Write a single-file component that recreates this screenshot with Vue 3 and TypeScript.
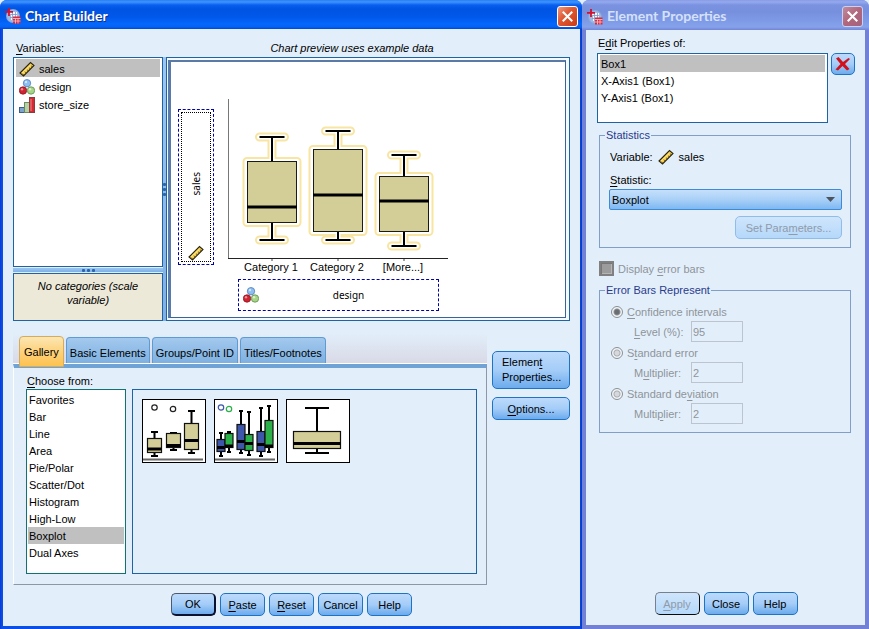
<script setup lang="ts">
import { ref } from 'vue'

type Measure = 'scale' | 'nominal' | 'ordinal'

interface Variable {
  name: string
  measure: Measure
}

interface Box {
  x: number
  width: number
  top: number
  bottom: number
  median: number
  high: number
  low: number
  cap: number
  fill: string
}

interface Outlier {
  x: number
  y: number
  color: string
}

interface Thumb {
  title: string
  axis: boolean
  boxes: Box[]
  outliers: Outlier[]
}

const TAN = '#d3ce98'
const BLUE = '#3e57ab'
const GREEN = '#2bb04a'

const variables: Variable[] = [
  { name: 'sales', measure: 'scale' },
  { name: 'design', measure: 'nominal' },
  { name: 'store_size', measure: 'ordinal' },
]
const activeVariable = ref('sales')

const tabs = ['Gallery', 'Basic Elements', 'Groups/Point ID', 'Titles/Footnotes']
const activeTab = ref('Gallery')

const chartTypes = [
  'Favorites', 'Bar', 'Line', 'Area', 'Pie/Polar', 'Scatter/Dot',
  'Histogram', 'High-Low', 'Boxplot', 'Dual Axes',
]
const chartType = ref('Boxplot')

const elements = ['Box1', 'X-Axis1 (Box1)', 'Y-Axis1 (Box1)']
const element = ref('Box1')
const statistic = ref('Boxplot')
const errorBars = ref(false)
const represent = ref('ci')
const level = ref('95')
const errorMultiplier = ref('2')
const deviationMultiplier = ref('2')

function box(
  x: number, width: number, top: number, bottom: number,
  median: number, high: number, low: number, cap: number, fill: string,
): Box {
  return { x, width, top, bottom, median, high, low, cap, fill }
}

const categories = [
  { label: 'Category 1', box: box(247, 50, 161.5, 222.5, 207, 137, 240, 25, TAN) },
  { label: 'Category 2', box: box(313, 50, 149.5, 231.5, 195, 131, 240, 25, TAN) },
  { label: '[More...]', box: box(379, 50, 176.5, 231.5, 201, 155, 246, 25, TAN) },
]

const thumbs: Thumb[] = [
  {
    title: 'Simple Boxplot',
    axis: true,
    boxes: [
      box(4.5, 14, 38.5, 52.5, 49, 32, 56, 7, TAN),
      box(23.5, 14, 33.5, 47.5, 45.5, 33, 50, 7, TAN),
      box(41.5, 14, 23.5, 49.5, 40.5, 11, 53, 7, TAN),
    ],
    outliers: [
      { x: 11.5, y: 7.5, color: '#222' },
      { x: 30, y: 9, color: '#222' },
    ],
  },
  {
    title: 'Clustered Boxplot',
    axis: true,
    boxes: [
      box(2, 8, 39.5, 51.5, 47.5, 33, 56, 4, BLUE),
      box(10, 8, 33.5, 47.5, 46, 32, 52, 4, GREEN),
      box(22, 8, 24.5, 49.5, 41.5, 11, 53, 4, BLUE),
      box(30, 8, 34.5, 50.5, 43.5, 12, 55, 4, GREEN),
      box(42, 8, 31.5, 51.5, 44.5, 8, 56, 4, BLUE),
      box(50, 8, 20.5, 47.5, 46, 6, 52, 4, GREEN),
    ],
    outliers: [
      { x: 6, y: 7.5, color: BLUE },
      { x: 14, y: 9, color: GREEN },
    ],
  },
  {
    title: '1-D Boxplot',
    axis: false,
    boxes: [box(6.5, 47, 31.5, 48.5, 43.5, 8, 53, 24, TAN)],
    outliers: [],
  },
]

function middle(b: Box): number {
  return b.x + b.width / 2
}

function whiskers(b: Box): string {
  const c = middle(b)
  const half = b.cap / 2
  return `M${c - half} ${b.high}H${c + half}M${c} ${b.high}V${b.top}` +
    `M${c} ${b.bottom}V${b.low}M${c - half} ${b.low}H${c + half}`
}

function outline(b: Box): string {
  return `${whiskers(b)}M${b.x} ${b.top}h${b.width}V${b.bottom}h${-b.width}Z`
}
</script>

<template>
  <svg class="symbols" width="0" height="0" aria-hidden="true">
    <symbol id="ic-scale" viewBox="0 0 16 16">
      <path d="M1 12 L11.5 1.5 L15 4.5 L4.5 15 Z" fill="#f6cf4c" stroke="#2b2410" stroke-width="1.1" />
      <path d="M3 12.3 L12 3.6" stroke="#fff0a0" stroke-width="1" />
      <path d="M4.800 13.800l-1.2-1M6.900 11.800l-1.2-1.1M9 9.700L7.900 8.600M11 7.700L9.900 6.600M13 5.700l-1.2-1.2" stroke="#6a5410" stroke-width=".9" />
    </symbol>
    <symbol id="ic-nominal" viewBox="0 0 16 16">
      <circle cx="8" cy="4.2" r="3.7" fill="#8fbdf0" stroke="#4a7fbd" stroke-width=".8" />
      <circle cx="4" cy="11.5" r="3.7" fill="#cf2431" stroke="#8d1420" stroke-width=".8" />
      <circle cx="12" cy="11.5" r="3.7" fill="#a8d48a" stroke="#5a8f4b" stroke-width=".8" />
      <circle cx="7" cy="3" r="1.2" fill="#d3e7fc" />
      <circle cx="3" cy="10.2" r="1.2" fill="#ee8d92" />
      <circle cx="11" cy="10.2" r="1.2" fill="#dcf2cb" />
    </symbol>
    <symbol id="ic-ordinal" viewBox="0 0 16 16">
      <rect x=".5" y="10.5" width="5" height="5" fill="#7ea4cb" stroke="#3b5f86" />
      <rect x="5.5" y="5.5" width="5" height="10" fill="#b5d1a6" stroke="#6b8a60" />
      <rect x="10.5" y=".5" width="5" height="15" fill="#d42a33" stroke="#8c3a3a" />
      <path d="M12 2v12" stroke="#f08a8a" />
    </symbol>
    <symbol id="ic-app" viewBox="0 0 16 16">
      <circle cx="8" cy="8" r="7" fill="#88a8dc" />
      <circle cx="8" cy="8" r="6" fill="#a9c1e8" opacity=".7" />
      <path d="M4 4h8v8H6V7H4z" fill="#f4f7ff" />
      <path d="M5 6.5h7M5 9.5h7M7.5 4v8M10.5 4v8" stroke="#7b95c8" stroke-width=".8" />
      <path d="M4 0v8M0 3.8h8" stroke="#d3102e" stroke-width="1.8" />
      <rect x="8" y="8.5" width="7.5" height="7" fill="#d8293e" />
      <path d="M8 10.5h7.5M8 13h7.5M10.5 10.5v5M13 10.5v5" stroke="#f7c8cd" stroke-width=".8" />
    </symbol>
    <symbol id="ic-close" viewBox="0 0 20 20">
      <path d="M5 5l10 10M15 5L5 15" stroke="#fff" stroke-width="2.2" />
    </symbol>
  </svg>

  <main class="desktop">
    <section class="window builder" aria-label="Chart Builder">
      <header class="titlebar">
        <svg class="icon"><use href="#ic-app" /></svg>
        <h1>Chart Builder</h1>
        <button class="close" type="button" aria-label="Close Chart Builder">
          <svg><use href="#ic-close" /></svg>
        </button>
      </header>

      <div class="body">
        <div class="captions">
          <span id="vars-label"><u>V</u>ariables:</span>
          <em>Chart preview uses example data</em>
        </div>

        <div class="work">
          <div class="side">
            <ul class="variables" aria-labelledby="vars-label">
              <li v-for="v in variables" :key="v.name">
                <button
                  type="button"
                  :class="{ on: v.name === activeVariable }"
                  @click="activeVariable = v.name"
                >
                  <svg class="icon"><use :href="`#ic-${v.measure}`" /></svg>
                  {{ v.name }}
                </button>
              </li>
            </ul>
            <div class="splitter across"><i></i><i></i><i></i></div>
            <p class="categories">No categories (scale variable)</p>
          </div>
          <div class="splitter down"><i></i><i></i><i></i></div>
          <div class="preview">
            <div class="canvas">
              <div class="zone y-zone">
                <span>sales</span>
                <svg class="icon"><use href="#ic-scale" /></svg>
              </div>
              <div class="plot">
                <svg class="chart" width="222" height="180" viewBox="228 98 222 180" role="img" aria-label="Boxplot preview">
                  <g fill="none" stroke-linecap="round" stroke-linejoin="round">
                    <g v-for="c in categories" :key="c.label">
                      <path :d="outline(c.box)" stroke="#f8e5a2" stroke-width="9" />
                      <path :d="outline(c.box)" stroke="#fff" stroke-width="5" />
                    </g>
                  </g>
                  <path d="M228.5 99V258" stroke="#777" />
                  <path d="M228 258.5H448" stroke="#222" />
                  <g v-for="c in categories" :key="c.label">
                    <path :d="whiskers(c.box)" fill="none" stroke="#000" stroke-width="2" />
                    <rect
                      :x="c.box.x + 0.5" :y="c.box.top" :width="c.box.width - 1"
                      :height="c.box.bottom - c.box.top" :fill="c.box.fill" stroke="#1c1c14"
                    />
                    <path :d="`M${c.box.x} ${c.box.median}h${c.box.width}`" stroke="#000" stroke-width="3" />
                    <path :d="`M${middle(c.box)} 259v2`" stroke="#444" />
                    <text :x="middle(c.box) - 1" y="271" text-anchor="middle">{{ c.label }}</text>
                  </g>
                </svg>
                <div class="zone x-zone">
                  <svg class="icon"><use href="#ic-nominal" /></svg>
                  <span>design</span>
                </div>
              </div>
            </div>
          </div>
        </div>

        <div class="lower">
          <div class="pane">
            <div class="tabs" role="tablist">
              <button
                v-for="t in tabs" :key="t" type="button" role="tab"
                :aria-selected="t === activeTab" :class="{ on: t === activeTab }"
                @click="activeTab = t"
              >{{ t }}</button>
            </div>
            <div class="panel">
              <label for="chart-type"><u>C</u>hoose from:</label>
              <div class="choices">
                <select id="chart-type" v-model="chartType" class="list types" size="10">
                  <option v-for="c in chartTypes" :key="c">{{ c }}</option>
                </select>
                <div class="gallery">
                  <button v-for="t in thumbs" :key="t.title" class="thumb" type="button" :aria-label="t.title">
                    <svg width="62" height="62" viewBox="0 0 62 62">
                      <path v-if="t.axis" d="M0 59.5H60" stroke="#666" stroke-width="2" />
                      <g v-for="(b, i) in t.boxes" :key="i">
                        <path :d="whiskers(b)" fill="none" stroke="#000" stroke-width="2" />
                        <rect
                          :x="b.x" :y="b.top" :width="b.width" :height="b.bottom - b.top"
                          :fill="b.fill" stroke="#111" stroke-width="1.2"
                        />
                        <path :d="`M${b.x} ${b.median}h${b.width}`" stroke="#000" stroke-width="3" />
                      </g>
                      <circle
                        v-for="(o, i) in t.outliers" :key="`o${i}`"
                        :cx="o.x" :cy="o.y" r="2.7" fill="none" :stroke="o.color" stroke-width="1.2"
                      />
                    </svg>
                  </button>
                </div>
              </div>
            </div>
          </div>
          <div class="actions">
            <button class="btn tall" type="button">Elemen<u>t</u><br>Properties...</button>
            <button class="btn" type="button"><u>O</u>ptions...</button>
          </div>
        </div>

        <footer class="buttons">
          <button class="btn default" type="button">OK</button>
          <button class="btn" type="button"><u>P</u>aste</button>
          <button class="btn" type="button"><u>R</u>eset</button>
          <button class="btn" type="button">Cancel</button>
          <button class="btn" type="button">Help</button>
        </footer>
      </div>
    </section>

    <section class="window props" aria-label="Element Properties">
      <header class="titlebar">
        <svg class="icon"><use href="#ic-app" /></svg>
        <h2>Element Properties</h2>
        <button class="close" type="button" aria-label="Close Element Properties">
          <svg><use href="#ic-close" /></svg>
        </button>
      </header>

      <div class="body">
        <label for="element" class="edit-label">E<u>d</u>it Properties of:</label>
        <div class="edit-row">
          <select id="element" v-model="element" class="list elements" size="3">
            <option v-for="e in elements" :key="e">{{ e }}</option>
          </select>
          <button class="btn delete" type="button" aria-label="Remove element">
            <svg width="18" height="16" viewBox="0 0 18 16">
              <path d="M2 2.500L4.500 1 9 6 14.500 2 16 3 11 8l4.500 5-2.500 1.500L8.500 10 4 14.500 1.500 13.500 6.500 8z" fill="#d2121b" />
            </svg>
          </button>
        </div>

        <fieldset>
          <legend>Statistics</legend>
          <div class="variable">
            <span>Variable:</span>
            <svg class="icon"><use href="#ic-scale" /></svg>
            <span>sales</span>
          </div>
          <label for="statistic" class="stat-label"><u>S</u>tatistic:</label>
          <div class="combo">
            <select id="statistic" v-model="statistic">
              <option>Boxplot</option>
            </select>
            <svg width="9" height="5" viewBox="0 0 9 5"><path d="M0 0h9L4.500 5z" fill="#4d545e" /></svg>
          </div>
          <button class="btn params" type="button" disabled>Set Para<u>m</u>eters...</button>
        </fieldset>

        <label class="check">
          <input v-model="errorBars" type="checkbox" disabled>
          <span>Display <u>e</u>rror bars</span>
        </label>

        <fieldset class="represent">
          <legend>Error Bars Represent</legend>
          <label class="radio">
            <input v-model="represent" type="radio" name="represent" value="ci" disabled>
            <span><u>C</u>onfidence intervals</span>
          </label>
          <div class="amount">
            <label for="level"><u>L</u>evel (%):</label>
            <input id="level" v-model="level" type="text" disabled>
          </div>
          <label class="radio">
            <input v-model="represent" type="radio" name="represent" value="se" disabled>
            <span>S<u>t</u>andard error</span>
          </label>
          <div class="amount">
            <label for="se-mult">M<u>u</u>ltiplier:</label>
            <input id="se-mult" v-model="errorMultiplier" type="text" disabled>
          </div>
          <label class="radio">
            <input v-model="represent" type="radio" name="represent" value="sd" disabled>
            <span>Standard de<u>v</u>iation</span>
          </label>
          <div class="amount">
            <label for="sd-mult">Multi<u>p</u>lier:</label>
            <input id="sd-mult" v-model="deviationMultiplier" type="text" disabled>
          </div>
        </fieldset>

        <footer class="buttons">
          <button class="btn default" type="button" disabled><u>A</u>pply</button>
          <button class="btn" type="button">Close</button>
          <button class="btn" type="button">Help</button>
        </footer>
      </div>
    </section>
  </main>
</template>

<style>
body {
  background: #e2effb;
}
</style>

<style scoped>
* {
  box-sizing: border-box;
}

.symbols {
  position: absolute;
}

.desktop {
  display: flex;
  min-height: 100vh;
  font: 11px/14px "Liberation Sans", Arial, sans-serif;
  color: #000;
}

button,
input,
select {
  margin: 0;
  font: inherit;
  color: inherit;
}

u {
  text-underline-offset: 2px;
  text-decoration-thickness: 1px;
}

.icon {
  display: block;
  flex: none;
  width: 16px;
  height: 16px;
}

/* Windows */
.window {
  display: flex;
  flex-direction: column;
}

.builder {
  flex: 1;
  background: linear-gradient(90deg, #0a3ad4, #0b4fe6 2px, #0a48de calc(100% - 2px), #0538cc);
  padding: 0 2px 3px 3px;
  border-radius: 7px 7px 0 0;
}

.props {
  flex: none;
  width: 287px;
  background: #7280d6;
  padding: 0 4px 4px;
  border-radius: 7px 7px 0 0;
}

.titlebar {
  display: flex;
  align-items: center;
  gap: 4px;
  height: 29px;
  margin: 0 -2px 0 -3px;
  padding: 3px 4px 0 5px;
  border-radius: 7px 7px 0 0;
  background: linear-gradient(#2a7ff5, #3d95ff 2px, #0a5ff0 5px, #0054e3 9px, #0058ea 17px, #0568fc 24px, #0462f4 27px, #0247cf);
}

.props .titlebar {
  height: 30px;
  margin: 0 -4px;
  padding-right: 6px;
  background: linear-gradient(#8a9ce4, #93a9ef 2px, #7a92e0 5px, #7790de 12px, #7f9ce8 22px, #86a2ea 27px, #7284d8);
}

.titlebar h1,
.titlebar h2 {
  flex: 1;
  margin: 0;
  padding-bottom: 1px;
  font: bold 14px/18px Lato, "Noto Sans", sans-serif;
  color: #fff;
  text-shadow: 1px 1px #0b3496;
}

.titlebar h2 {
  color: #d5e0fa;
  text-shadow: none;
}

.close {
  display: grid;
  place-items: center;
  width: 21px;
  height: 21px;
  padding: 0;
  border: 1px solid #fff;
  border-radius: 3px;
  background: linear-gradient(135deg, #f09a80, #e05a35 40%, #c93a14);
}

.close svg {
  display: block;
  width: 19px;
  height: 19px;
}

.props .close {
  border-color: #c9d2f3;
  background: linear-gradient(135deg, #c08b9f, #b0667c 50%, #a4637f);
}

.body {
  flex: 1;
  display: flex;
  flex-direction: column;
  background: #e2effb;
}

.builder .body {
  padding: 12px 10px 10px;
}

.props .body {
  padding: 6px 10px 10px 11px;
}

/* Buttons */
.btn {
  height: 23px;
  padding: 0;
  text-align: center;
  border: 1px solid #1f73c4;
  border-radius: 5px;
  background: linear-gradient(#bcdafb, #a5cdf8 50%, #6cabed);
}

.btn.default {
  border: 1px solid #4c5a70;
  border-right: 2px solid #0a1230;
  border-bottom: 2px solid #0a1230;
}

.btn:disabled {
  color: #8f9baa;
  border-color: #8fbdea;
  background: linear-gradient(#cfe5fc, #b5d8fa);
}

.btn.default:disabled {
  border-width: 1px;
  border-color: #76808e #0a0a0a #0a0a0a #76808e;
}

.buttons {
  display: flex;
  justify-content: center;
  gap: 4px;
}

.buttons .btn {
  width: 45px;
}

/* Work area */
.captions {
  display: grid;
  grid-template-columns: 121px 1fr;
  margin-bottom: 2px;
}

.captions span {
  padding-left: 3px;
}

.captions em {
  text-align: center;
}

.work {
  display: grid;
  grid-template-columns: 150px 3px 1fr;
  min-height: 264px;
}

.side {
  display: flex;
  flex-direction: column;
}

.variables {
  flex: 1;
  margin: 0;
  padding: 1px 2px;
  list-style: none;
  border: 1px solid #1e64a5;
  background: #fff;
}

.variables button {
  display: flex;
  align-items: center;
  gap: 4px;
  width: 100%;
  height: 18px;
  padding: 2px 3px 0;
  border: 0;
  background: none;
  text-align: left;
}

.variables .on {
  background: #c0c0c0;
}

.splitter {
  display: flex;
  align-items: center;
  justify-content: center;
  gap: 2px;
  background: linear-gradient(#9cc6f2, #7fb0e4);
}

.splitter i {
  width: 3px;
  height: 3px;
  border-radius: 1px;
  background: #2c64a8;
}

.across {
  height: 4px;
  margin: 1px 0;
}

.down {
  flex-direction: column;
}

.categories {
  height: 48px;
  margin: 0;
  padding: 5px 20px;
  border: 1px solid #1e64a5;
  background: #ece9d8;
  font-style: italic;
  text-align: center;
}

.preview {
  display: flex;
  padding: 2px 3px 2px 1px;
  border: 1px solid #1e64a5;
  background: #f4f9fe;
}

.canvas {
  flex: 1;
  display: flex;
  align-items: flex-start;
  gap: 14px;
  padding: 36px 7px 5px;
  border: 1px solid #3a6497;
  border-top: 2px solid #5a7ba8;
  border-left: 3px solid #5a7ba8;
  background: #fff;
}

.zone {
  border: 1px dashed #0000a8;
  font: 10px/14px "Noto Sans", Tahoma, sans-serif;
}

.y-zone {
  display: grid;
  grid-template-rows: 1fr auto;
  justify-items: center;
  align-items: center;
  width: 36px;
  height: 156px;
  margin-top: 11px;
  padding: 12px 0 3px;
  outline: 1px dotted #000;
  outline-offset: -4px;
}

.y-zone span {
  writing-mode: vertical-rl;
  transform: rotate(180deg);
}

.chart {
  display: block;
  font: 11px "Liberation Sans", Arial, sans-serif;
}

.x-zone {
  display: grid;
  grid-template-columns: 16px 1fr;
  align-items: center;
  width: 201px;
  height: 32px;
  margin: 1px 0 0 10px;
  padding: 0 0 0 4px;
}

.x-zone span {
  text-align: center;
}

/* Tabs */
.lower {
  display: flex;
  gap: 5px;
  margin-top: 11px;
}

.pane {
  flex: 1;
}

.tabs {
  display: flex;
  align-items: flex-end;
  gap: 2px;
  padding-left: 6px;
  height: 32px;
  border-bottom: 1px solid #fff;
  background: linear-gradient(#e2effb, #d9d9e6);
}

.tabs button {
  height: 26px;
  padding: 5px 3px 0;
  border: 1px solid #5f9bd3;
  border-bottom: 0;
  border-radius: 4px 4px 0 0;
  background: linear-gradient(#a3c9ee, #7eb0e0);
}

.tabs .on {
  z-index: 1;
  height: 31px;
  padding: 0 4px;
  margin-bottom: -4px;
  border: 1px solid #d5ac5c;
  border-radius: 4px 4px 0 0;
  background: linear-gradient(#fbe6b4, #fdd27c 50%, #fdc24f);
}

.panel {
  display: flex;
  flex-direction: column;
  gap: 1px;
  padding: 6px 9px 10px 12px;
  border: 1px solid #8a98a8;
  border-top: 4px solid #6fa3d6;
  border-left-color: #fff;
}

.panel label {
  padding-left: 1px;
}

.choices {
  display: flex;
  gap: 6px;
  height: 185px;
}

.list {
  appearance: none;
  padding: 1px;
  overflow: hidden;
  border: 1px solid #1e64a5;
  border-radius: 0;
  background: #fff;
  outline: 0;
}

.list option {
  height: 17px;
  min-height: 17px;
  padding: 3px 1px 0;
  color: #000;
}

.list option:checked {
  background: linear-gradient(#c0c0c0, #c0c0c0);
  color: #000;
}

.types {
  width: 100px;
  border-color: #0f7273;
}

.gallery {
  flex: 1;
  display: flex;
  align-items: flex-start;
  gap: 8px;
  padding: 9px;
  border: 1px solid #1e64a5;
}

.thumb {
  width: 64px;
  height: 64px;
  padding: 0;
  border: 1px solid #000;
  background: #fff;
}

.thumb svg {
  display: block;
}

.actions {
  display: flex;
  flex-direction: column;
  gap: 8px;
  width: 78px;
  margin-top: 19px;
}

.btn.tall {
  height: 38px;
  padding-left: 9px;
  line-height: 15px;
  text-align: left;
}

.lower + .buttons {
  margin-top: auto;
}

/* Element properties */
.edit-label {
  padding-left: 1px;
  margin-bottom: 3px;
}

.edit-row {
  display: flex;
  align-items: flex-start;
  gap: 3px;
  margin-bottom: 5px;
}

.elements {
  flex: 1;
  height: 70px;
  padding: 1px 2px;
}

.delete {
  display: grid;
  place-items: center;
  width: 24px;
  height: 22px;
}

fieldset {
  display: flex;
  flex-direction: column;
  min-width: 0;
  margin: 0 4px 0 2px;
  padding: 7px 8px 8px 9px;
  border: 1px solid #7f9fc6;
}

legend {
  padding: 0 1px;
  margin-left: -4px;
  color: #2a3a8c;
}

.variable {
  display: flex;
  align-items: center;
  gap: 5px;
  height: 16px;
  padding-left: 1px;
}

.stat-label {
  margin: 8px 0 2px;
  padding-left: 1px;
}

.combo {
  display: grid;
  grid-template-columns: 1fr 16px;
  align-items: center;
}

.combo select {
  grid-area: 1 / 1 / 2 / 3;
  height: 21px;
  padding: 0 2px;
  appearance: none;
  border: 1px solid #3f8ad4;
  border-radius: 2px;
  background: linear-gradient(#c5e0fb, #a9d0f7 50%, #7db8f2);
}

.combo svg {
  grid-area: 1 / 2 / 2 / 3;
  pointer-events: none;
}

.params {
  align-self: flex-end;
  width: 107px;
  margin-top: 6px;
}

.check,
.radio {
  display: flex;
  align-items: center;
  color: #8f9499;
}

.check {
  gap: 4px;
  margin: 13px 0 7px 2px;
}

.check input {
  appearance: none;
  width: 15px;
  height: 15px;
  border: 2px solid #808080;
  background: #9c9c9c;
  box-shadow: inset 1px 1px #777, inset -1px -1px #b5b5b5;
}

.represent {
  padding-top: 6px;
}

.radio {
  gap: 4px;
  height: 18px;
  padding-left: 2px;
}

.radio input {
  appearance: none;
  width: 12px;
  height: 12px;
  border: 1px solid #8b8f94;
  border-radius: 50%;
  background: radial-gradient(circle, #d5d9de 2px, #a9adb2 3px, #f2f5f8 4px);
}

.radio input:checked {
  background: radial-gradient(circle, #6a6e73 2px, #8d9196 3px, #f2f5f8 4px);
}

.amount {
  display: grid;
  grid-template-columns: 57px 52px;
  align-items: center;
  padding-left: 25px;
  color: #8f9499;
}

.amount + .radio {
  margin-top: 2px;
}

.amount input {
  width: 52px;
  height: 21px;
  padding: 0 1px;
  border: 1px solid #bcc5cf;
  border-radius: 0;
  background: #e2effb;
  color: #8f9499;
}

.props .buttons {
  margin-top: auto;
}
</style>
